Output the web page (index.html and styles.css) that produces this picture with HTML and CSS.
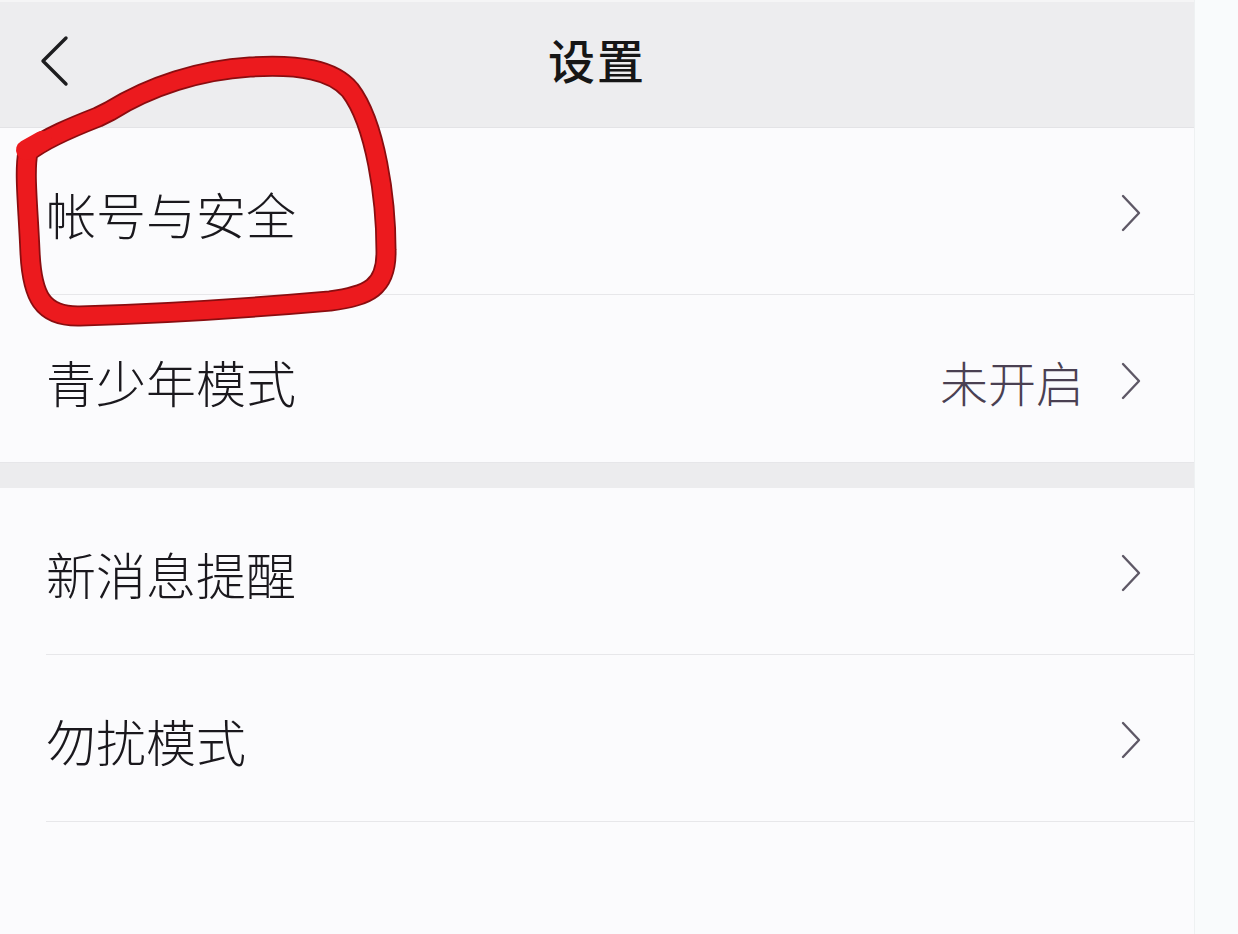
FILE: index.html
```html
<!DOCTYPE html>
<html lang="zh-CN">
<head>
<meta charset="utf-8">
<title>设置</title>
<link rel="stylesheet" href="styles.css">
</head>
<body>
<div class="page">
  <div class="screen">
    <header class="nav">
      <div class="nav-back">
        <svg width="30" height="52" viewBox="0 0 30 52"><polyline points="26,3 3,26 26,49" fill="none" stroke="#1d1d1f" stroke-width="3.4" stroke-linecap="round" stroke-linejoin="round"/></svg>
      </div>
      <h1 class="nav-title">设置</h1>
      <div class="nav-side"></div>
    </header>

    <section class="group">
      <div class="row">
        <span class="row-label">帐号与安全</span>
        <span class="row-right">
          <svg class="chev" width="22" height="40" viewBox="0 0 22 40"><polyline points="3,3 19,20 3,37" fill="none" stroke="#5e5866" stroke-width="2.4" stroke-linecap="round" stroke-linejoin="round"/></svg>
        </span>
      </div>
      <div class="row row-last">
        <span class="row-label">青少年模式</span>
        <span class="row-right">
          <span class="row-value">未开启</span>
          <svg class="chev" width="22" height="40" viewBox="0 0 22 40"><polyline points="3,3 19,20 3,37" fill="none" stroke="#5e5866" stroke-width="2.4" stroke-linecap="round" stroke-linejoin="round"/></svg>
        </span>
      </div>
    </section>

    <div class="gap"></div>

    <section class="group">
      <div class="row">
        <span class="row-label">新消息提醒</span>
        <span class="row-right">
          <svg class="chev" width="22" height="40" viewBox="0 0 22 40"><polyline points="3,3 19,20 3,37" fill="none" stroke="#5e5866" stroke-width="2.4" stroke-linecap="round" stroke-linejoin="round"/></svg>
        </span>
      </div>
      <div class="row">
        <span class="row-label">勿扰模式</span>
        <span class="row-right">
          <svg class="chev" width="22" height="40" viewBox="0 0 22 40"><polyline points="3,3 19,20 3,37" fill="none" stroke="#5e5866" stroke-width="2.4" stroke-linecap="round" stroke-linejoin="round"/></svg>
        </span>
      </div>
    </section>

    <svg class="scribble" width="420" height="340" viewBox="0 0 420 340">
      <g fill="none" stroke-linecap="round" stroke-linejoin="round">
        <path d="M 28 152 C 45 138, 75 126, 98 117 L 110 111 C 150 86, 200 70, 250 67 C 300 64, 333 70, 350 90 C 376 124, 386 200, 386 250 C 387 288, 368 296, 330 301 C 250 308, 150 314, 80 316 C 42 317, 32 296, 30 252 C 28 205, 24 172, 28 152" stroke="#8a0d10" stroke-width="21"/>
        <path d="M 28 152 C 45 138, 75 126, 98 117 L 110 111 C 150 86, 200 70, 250 67 C 300 64, 333 70, 350 90 C 376 124, 386 200, 386 250 C 387 288, 368 296, 330 301 C 250 308, 150 314, 80 316 C 42 317, 32 296, 30 252 C 28 205, 24 172, 28 152" stroke="#ec1a1e" stroke-width="17.5"/>
        <path d="M 26 150 L 42 141" stroke="#ec1a1e" stroke-width="20"/>
      </g>
    </svg>
  </div>
  <div class="edge"></div>
</div>
</body>
</html>
```

FILE: styles.css
```css
* {
  box-sizing: border-box;
}

html, body {
  margin: 0;
  padding: 0;
}

body {
  background: #fbfbfd;
  font-family: "Noto Sans CJK SC", "Noto Sans", sans-serif;
  color: #1c1a1f;
}

.page {
  display: flex;
  min-height: 934px;
}

.screen {
  position: relative;
  width: 1194px;
  flex: none;
  background: #fbfbfd;
}

.edge {
  flex: 1;
  background: #f9fbfc;
  border-left: 1px solid #eef1f2;
}

.nav {
  height: 128px;
  display: grid;
  grid-template-columns: 120px 1fr 120px;
  align-items: center;
  background: #ededef;
  border-top: 2px solid #f5f5f6;
  border-bottom: 1px solid #e3e3e6;
  padding-bottom: 12px;
}

.nav-back {
  display: flex;
  align-items: center;
  padding-left: 40px;
  padding-top: 4px;
}

.nav-title {
  margin: 0;
  text-align: center;
  font-size: 47px;
  font-weight: 500;
  color: #161616;
  letter-spacing: 2px;
  line-height: 1;
}

.group {
  background: #fbfbfd;
}

.row {
  height: 167px;
  margin-left: 46px;
  padding-right: 52px;
  padding-top: 4px;
  display: flex;
  align-items: center;
  justify-content: space-between;
  border-bottom: 1px solid #e7e7ea;
}

.row-last {
  border-bottom: none;
  height: 167px;
}

.row-label {
  font-size: 50px;
  font-weight: 300;
  line-height: 1;
  color: #1a181d;
}

.row-right {
  display: flex;
  align-items: center;
  gap: 36px;
}

.row-value {
  font-size: 48px;
  font-weight: 300;
  line-height: 1;
  color: #4a4052;
}

.chev {
  display: block;
}

.gap {
  height: 26px;
  background: #ececee;
  border-top: 1px solid #e6e6e9;
}

.scribble {
  position: absolute;
  left: 0;
  top: 0;
  pointer-events: none;
}
```
